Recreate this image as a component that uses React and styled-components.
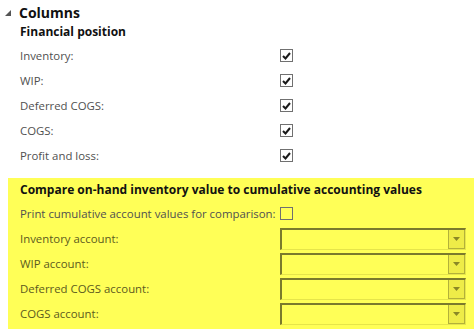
import React from "react";
import styled, { createGlobalStyle } from "styled-components";

const GlobalStyle = createGlobalStyle`
  body {
    margin: 0;
    background: #ffffff;
    font-family: "Segoe UI", "Open Sans", "Noto Sans", sans-serif;
    font-size: 11.4px;
    color: #1e1e1e;
  }
`;

const Page = styled.div`
  width: 474px;
  height: 333px;
  padding-top: 2px;
  box-sizing: border-box;
`;

const SectionHeader = styled.div`
  display: flex;
  align-items: center;
  height: 20px;
  padding-left: 5px;
  gap: 8px;
  font-size: 14px;
  font-weight: 700;
  color: #111;
`;

const Expander = styled.svg`
  width: 6px;
  height: 6px;
  margin-top: 2px;
`;

const GroupTitle = styled.div`
  height: 20px;
  line-height: 20px;
  padding-left: 20px;
  font-size: 12px;
  font-weight: 700;
  color: #111;
`;

const Rows = styled.div`
  display: grid;
  grid-template-columns: 260px 1fr;
  grid-auto-rows: 25px;
  align-items: center;
  padding-left: 20px;
  margin-top: 1px;
`;

const Label = styled.span`
  color: ${(p) => (p.$muted ? "#5c5a1e" : "#505050")};
  white-space: nowrap;
`;

const Box = styled.span`
  display: inline-flex;
  align-items: center;
  justify-content: center;
  width: 11px;
  height: 11px;
  border: 1px solid #707070;
  background: ${(p) => (p.$yellow ? "transparent" : "#fff")};
`;

const Highlight = styled.div`
  margin: 10px 0 0 8px;
  height: 151px;
  background: #ffff57;
  padding: 3px 0 0 12px;
  box-sizing: border-box;
`;

const HighlightTitle = styled.div`
  height: 18px;
  line-height: 18px;
  font-size: 12px;
  font-weight: 700;
  color: #111;
`;

const HighlightRows = styled(Rows)`
  padding-left: 0;
  margin-top: 2px;
`;

const Combo = styled.div`
  display: flex;
  width: 186px;
  height: 22px;
  box-sizing: border-box;
  border-top: 2px solid #7b7a2c;
  border-left: 2px solid #7b7a2c;
  border-right: 1px solid #e6e54a;
  border-bottom: 1px solid #e6e54a;
`;

const ComboField = styled.div`
  flex: 1;
`;

const ComboButton = styled.div`
  width: 15px;
  display: flex;
  align-items: center;
  justify-content: center;
  background: #eeec48;
  border: 1px solid #b3b13a;
  border-top: none;
`;

const Check = () => (
  <svg width="9" height="8" viewBox="0 0 9 8">
    <path d="M1 4 L3.5 6.5 L8 1" fill="none" stroke="#1a1a1a" strokeWidth="2" />
  </svg>
);

const Arrow = () => (
  <svg width="7" height="4" viewBox="0 0 7 4">
    <path d="M0 0 H7 L3.5 4 Z" fill="#8a8826" />
  </svg>
);

const positions = ["Inventory:", "WIP:", "Deferred COGS:", "COGS:", "Profit and loss:"];
const accounts = ["Inventory account:", "WIP account:", "Deferred COGS account:", "COGS account:"];

export default function App() {
  return (
    <Page>
      <GlobalStyle />
      <SectionHeader>
        <Expander viewBox="0 0 6 6">
          <path d="M6 0 V6 H0 Z" fill="#555" />
        </Expander>
        Columns
      </SectionHeader>
      <GroupTitle>Financial position</GroupTitle>
      <Rows>
        {positions.map((p) => (
          <React.Fragment key={p}>
            <Label>{p}</Label>
            <Box>
              <Check />
            </Box>
          </React.Fragment>
        ))}
      </Rows>
      <Highlight>
        <HighlightTitle>Compare on-hand inventory value to cumulative accounting values</HighlightTitle>
        <HighlightRows>
          <Label>Print cumulative account values for comparison:</Label>
          <Box $yellow />
          {accounts.map((a) => (
            <React.Fragment key={a}>
              <Label $muted>{a}</Label>
              <Combo>
                <ComboField />
                <ComboButton>
                  <Arrow />
                </ComboButton>
              </Combo>
            </React.Fragment>
          ))}
        </HighlightRows>
      </Highlight>
    </Page>
  );
}
